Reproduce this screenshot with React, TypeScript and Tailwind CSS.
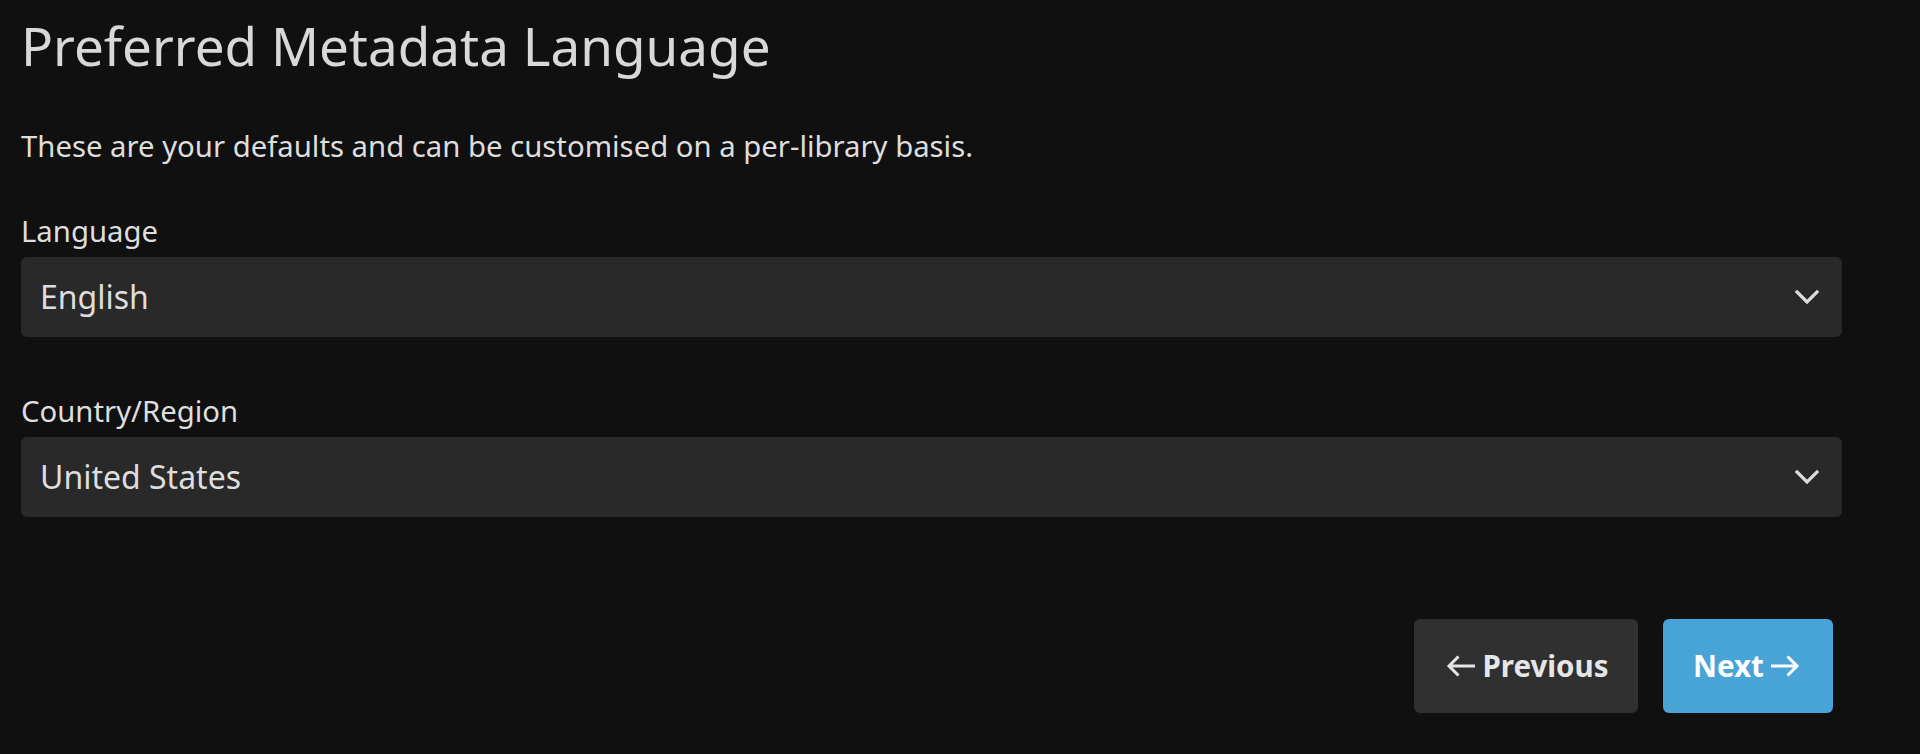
import React from "react";

function Chevron() {
  return (
    <svg width="26" height="18" viewBox="0 0 26 18" fill="none" className="shrink-0">
      <polyline points="3,4 13,14 23,4" stroke="#dcdcdc" strokeWidth="3.2" strokeLinecap="square" />
    </svg>
  );
}

function Select({ value }: { value: string }) {
  return (
    <div className="w-[1821px] h-[80px] bg-[#292929] rounded-[6px] flex items-center justify-between pl-[19px] pr-[22px]">
      <span className="text-[32px] leading-[40px] text-[#dedede]">{value}</span>
      <Chevron />
    </div>
  );
}

export default function App() {
  return (
    <div
      className="w-[1920px] h-[754px] bg-[#101010] text-[#dedede] pl-[21px] pt-[15px] flex flex-col"
      style={{ fontFamily: '"Noto Sans", sans-serif' }}
    >
      <h1 className="text-[53px] leading-[62px] font-normal text-[#d8d8d8]">Preferred Metadata Language</h1>
      <p className="mt-[49px] text-[29.3px] leading-[40px]">These are your defaults and can be customised on a per-library basis.</p>
      <label className="mt-[45px] text-[29.3px] leading-[40px]">Language</label>
      <div className="mt-[6px]">
        <Select value="English" />
      </div>
      <label className="mt-[54px] text-[29.3px] leading-[40px]">Country/Region</label>
      <div className="mt-[6px]">
        <Select value="United States" />
      </div>
      <div className="w-[1821px] flex justify-end gap-[25px] pr-[9px] mt-[102px]">
        <button className="w-[224px] h-[94px] bg-[#303030] rounded-[6px] flex items-center justify-center gap-[7px] text-[29.5px] font-bold text-[#e6e6e6]">
          <svg width="32" height="32" viewBox="0 0 32 32" fill="none" className="shrink-0">
            <path d="M32 16H6M15.5 6.5L6 16l9.5 9.5" stroke="#e6e6e6" strokeWidth="3" />
          </svg>
          <span>Previous</span>
        </button>
        <button className="w-[170px] h-[94px] bg-[#48a3d7] rounded-[6px] flex items-center justify-center gap-[7px] text-[29.5px] font-bold text-white">
          <span>Next</span>
          <svg width="32" height="32" viewBox="0 0 32 32" fill="none" className="shrink-0">
            <path d="M0 16h26M16.5 6.5L26 16l-9.5 9.5" stroke="#ffffff" strokeWidth="3" />
          </svg>
        </button>
      </div>
    </div>
  );
}
